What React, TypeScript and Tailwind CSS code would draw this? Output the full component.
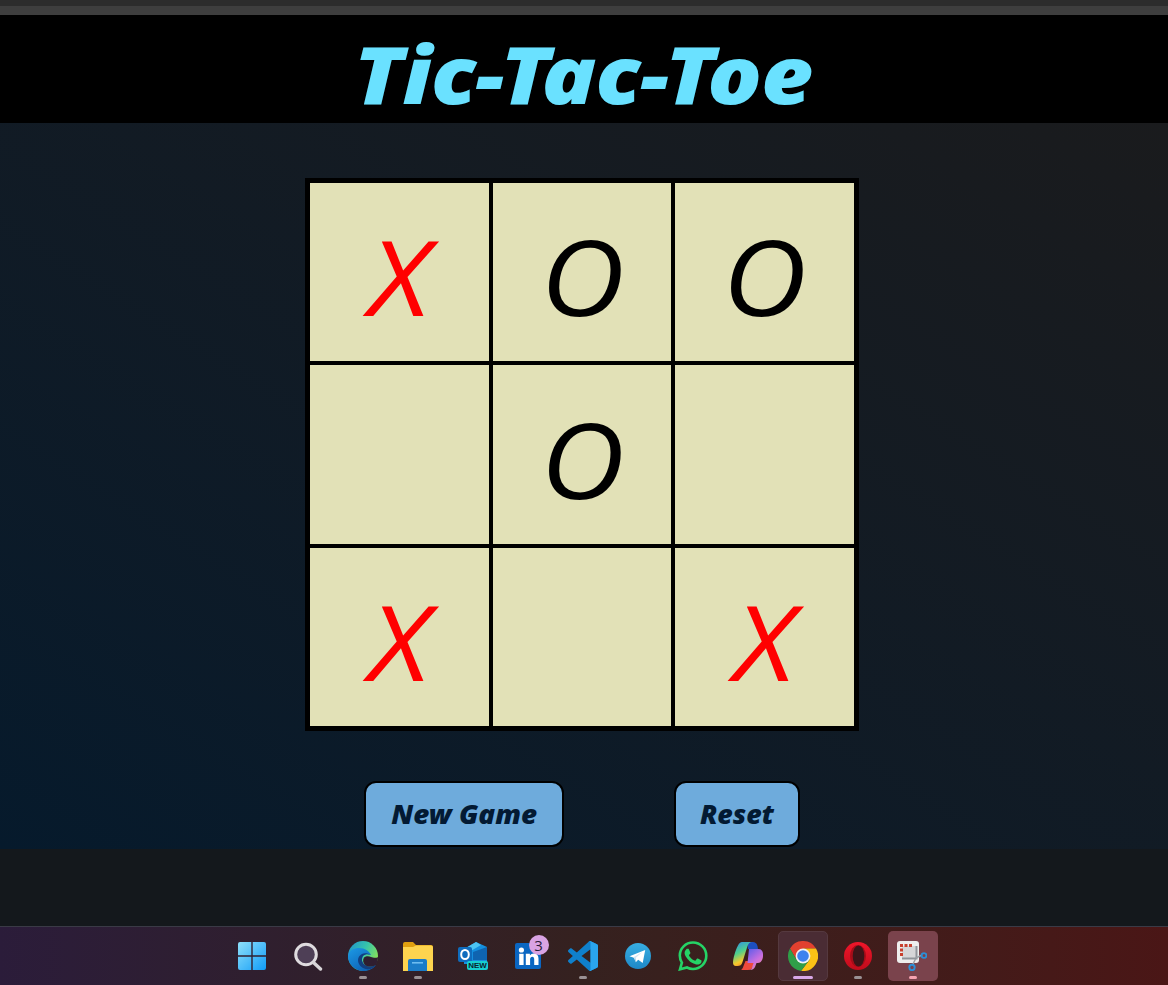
import React from 'react';

const board = ['X', 'O', 'O', '', 'O', '', 'X', '', 'X'];

const Dot = ({ color = 'bg-[#9a9194]', wide = false }: { color?: string; wide?: boolean }) => (
  <div className={`absolute bottom-[2px] left-1/2 -translate-x-1/2 h-[3px] rounded-full ${wide ? 'w-[20px]' : 'w-[8px]'} ${color}`} />
);

const WindowsIcon = () => (
  <svg width="30" height="30" viewBox="0 0 30 30" className="ml-[-3px]">
    <defs>
      <linearGradient id="win" x1="0" y1="0" x2="1" y2="1">
        <stop offset="0" stopColor="#8fe0fa" />
        <stop offset="1" stopColor="#109cf8" />
      </linearGradient>
    </defs>
    <path fill="url(#win)" d="M1 3a2 2 0 0 1 2-2h11.300v13.300H1zM15.700 1H27a2 2 0 0 1 2 2v11.300H15.700zM1 15.700h13.300V29H3a2 2 0 0 1-2-2zM15.700 15.700H29V27a2 2 0 0 1-2 2H15.700z" />
  </svg>
);

const SearchIcon = () => (
  <svg width="30" height="30" viewBox="0 0 30 30" fill="none">
    <circle cx="13" cy="13.500" r="10.300" fill="#4e3f56" stroke="#dfdcdf" strokeWidth="3" />
    <path d="M21 22l6.500 6" stroke="#d8d5d8" strokeWidth="3.400" strokeLinecap="round" />
  </svg>
);

const EdgeIcon = () => (
  <svg width="30" height="30" viewBox="0 0 30 30">
    <defs>
      <linearGradient id="edgeA" x1="0" y1="0" x2="1" y2="0.5">
        <stop offset="0" stopColor="#1f8fd0" />
        <stop offset="0.55" stopColor="#35c4ac" />
        <stop offset="1" stopColor="#86e25a" />
      </linearGradient>
      <linearGradient id="edgeB" x1="0" y1="0" x2="0.8" y2="1">
        <stop offset="0" stopColor="#1c9ae6" />
        <stop offset="1" stopColor="#0c5cb0" />
      </linearGradient>
    </defs>
    <circle cx="15" cy="15" r="15" fill="url(#edgeA)" />
    <path fill="url(#edgeB)" d="M0 15C1 9 6 7 11 7c6 0 10 3 12 7-3-1-6-1-8 1-2 3-1 7 2 9 3 2 7 2 11 0-3 4-8 6-13 6C7 30 0 23 0 15z" />
    <path fill="#123f80" d="M14 13c2-1 6-1 9 1-3-1-6-1-8 1-2 3-1 7 2 9 3 2 7 2 11 0-2 3-6 5-10 4-5-1-8-5-8-9 0-3 2-5 4-6z" />
    <path fill="#2f1e30" d="M16 16.500c2-1.500 5-1.500 7-.5 2 1 7 1 7 0 0 3-1 6-2 8-4 2-8 2-11 0-2-2-2.500-5-1-7.500z" />
  </svg>
);

const FolderIcon = () => (
  <svg width="30" height="29" viewBox="0 0 30 29">
    <path fill="#e0a010" d="M0 2a2 2 0 0 1 2-2h8l3 3h15a2 2 0 0 1 2 2v5H0z" />
    <path fill="#fdd44f" d="M0 5h10l3-1.500h15a2 2 0 0 1 2 2V29H0z" />
    <path fill="#1a7cc8" d="M5 19a2 2 0 0 1 2-2h15a2 2 0 0 1 2 2v10H5z" />
    <rect x="9" y="20" width="11" height="1.600" fill="#6cbcf0" />
  </svg>
);

const OutlookIcon = () => (
  <div className="relative w-[30px] h-[28px]">
    <svg width="30" height="28" viewBox="0 0 30 28" className="absolute inset-0">
      <path fill="#1490df" d="M6 7L18 0l11 5v17H6z" />
      <path fill="#0f64b0" d="M15 10l14-5v13H15z" />
      <path fill="#4cc4f2" d="M6 7L18 0l5 3-12 7z" />
      <rect x="0" y="5" width="14" height="15" rx="2" fill="#0f6cbd" />
      <ellipse cx="7" cy="12.500" rx="3.800" ry="4.600" fill="none" stroke="#fff" strokeWidth="2" />
    </svg>
    <span className="absolute right-0 bottom-0 w-[21px] h-[9px] rounded-[2px] bg-[#16cfd0] text-[#0a2430] text-[8px] font-bold leading-[9px] text-center">NEW</span>
  </div>
);

const LinkedInIcon = () => (
  <svg width="26" height="26" viewBox="0 0 26 26">
    <rect width="26" height="26" rx="2" fill="#0a66c2" />
    <circle cx="6.400" cy="7" r="2.600" fill="#fff" />
    <rect x="4.200" y="10.800" width="4.400" height="11.200" fill="#fff" />
    <path fill="#fff" d="M10.800 10.800h4.100v1.700c.8-1.300 2.200-2.100 3.900-2.100 3.300 0 4.700 2 4.700 5.300V22h-4.300v-5.700c0-1.600-.6-2.500-1.900-2.500s-2.200.9-2.200 2.600V22h-4.300z" />
  </svg>
);

const VsCodeIcon = () => (
  <svg width="30" height="30" viewBox="0 0 100 100">
    <path fill="#0f80cc" fillRule="evenodd" d="M70.900 99.300c1.600.6 3.400.6 5-.2l20.600-9.900c2.100-1 3.500-3.200 3.500-5.600V16.400c0-2.400-1.400-4.600-3.500-5.600L75.900.9c-2.100-1-4.600-.8-6.400.5-.3.2-.5.400-.7.700L29.400 38 12.200 25c-1.600-1.200-3.800-1.100-5.300.2l-5.500 5c-1.800 1.700-1.800 4.500 0 6.200L16.200 50 1.400 63.600c-1.800 1.600-1.800 4.500 0 6.100l5.500 5c1.500 1.400 3.700 1.500 5.300.3L29.400 62l39.400 35.900c.6.600 1.300 1.100 2.100 1.400zM75 27.300L45.100 50 75 72.700z" />
    <path fill="#2aa5ee" d="M75.900.9l20.600 9.900c2.100 1 3.500 3.200 3.500 5.600v67.200c0 2.400-1.400 4.600-3.500 5.600l-20.600 9.900c-2.400 1.200-5.300.7-7.100-1.200 2.300 2.300 6.200.7 6.200-2.600V4.700c0-3.300-3.900-4.900-6.200-2.600C70.600.2 73.500-.3 75.900.9z" />
  </svg>
);

const TelegramIcon = () => (
  <svg width="26" height="26" viewBox="0 0 26 26">
    <defs>
      <linearGradient id="tg" x1="0" y1="0" x2="0" y2="1">
        <stop offset="0" stopColor="#37aee2" />
        <stop offset="1" stopColor="#1e88c7" />
      </linearGradient>
    </defs>
    <circle cx="13" cy="13" r="13" fill="url(#tg)" />
    <path fill="#fff" d="M4.500 13.200L20.200 7 17.700 20l-4.500-3.200-2.400 2.400-.5-4z" />
    <path fill="#d4e6f2" d="M10.300 15.200l7-6.200-8.800 5.300 2.300 4.900z" />
  </svg>
);

const WhatsAppIcon = () => (
  <svg width="30" height="30" viewBox="0 0 30 30" fill="none">
    <path d="M15 1.500C7.600 1.500 1.800 7.300 1.800 14.600c0 2.600.8 5 2.100 7L2 28.300l7-1.800c1.800 1 3.900 1.500 6 1.500 7.400 0 13.300-5.900 13.300-13.200S22.400 1.500 15 1.500z" stroke="#25d366" strokeWidth="2.600" />
    <path fill="#25d366" d="M11 8.500c-.3-.7-.6-.7-.9-.7h-.8c-.3 0-.8.100-1.200.6-.4.500-1.500 1.500-1.500 3.500s1.500 4 1.700 4.300c.2.300 2.900 4.600 7.200 6.300 3.500 1.400 4.200 1.100 5 1 .8-.1 2.500-1 2.800-2 .3-1 .3-1.800.2-2-.1-.2-.4-.3-.8-.5l-2.800-1.400c-.4-.2-.7-.3-1 .2l-1.300 1.700c-.3.300-.5.300-.9.100-.4-.2-1.800-.7-3.400-2.100-1.200-1.100-2.100-2.500-2.300-2.900-.2-.4 0-.7.200-.9l.7-.8c.2-.2.300-.4.400-.7.100-.2.100-.5 0-.7z" />
  </svg>
);

const CopilotIcon = () => (
  <svg width="30" height="28" viewBox="0 0 30 28">
    <defs>
      <linearGradient id="copA" x1="0.1" y1="0" x2="0.5" y2="1">
        <stop offset="0" stopColor="#2f8fe8" />
        <stop offset="0.45" stopColor="#4fd08c" />
        <stop offset="0.8" stopColor="#f7c92c" />
        <stop offset="1" stopColor="#f08a2c" />
      </linearGradient>
      <linearGradient id="copB" x1="0.2" y1="0" x2="0.8" y2="1">
        <stop offset="0" stopColor="#6a5fe8" />
        <stop offset="0.55" stopColor="#c96fe0" />
        <stop offset="1" stopColor="#f08aa0" />
      </linearGradient>
    </defs>
    <path fill="#1d4fc0" d="M14 0h6c2 0 3.500 1 4.500 4l.5 3h-10z" />
    <path fill="#ef4a3c" d="M8 28h7c3 0 4.500-2 5.500-5l1-4h-9l-2 5c-.6 2-1.500 3.500-2.500 4z" />
    <path fill="url(#copB)" d="M16 7h9.500c2.800 0 4.500 2 4.500 5v2c0 3.500-2 7-5 7h-1.500l-1.500 4c-1 2-2.500 3-5 3h-1c2 0 3-1.500 3.500-4l1-3h-6z" />
    <path fill="url(#copA)" d="M9 0h10c-2 0-3.500 1.500-4.500 4l-5 16c-.8 3-2.500 4-5 4H2.800C1 24 0 22.500 0 20.500c0-2 .5-5 1.500-8C2.500 9 3.500 6 5 3.500 6 1.500 7.500 0 9 0z" />
  </svg>
);

const ChromeIcon = () => (
  <svg width="30" height="30" viewBox="0 0 30 30">
    <path fill="#e2412f" d="M2 7.500A15 15 0 0 1 28 7.500H15L8.500 18.750z" />
    <path fill="#fbc116" d="M28 7.500A15 15 0 0 1 13 29.900L21.500 18.750 15 7.500z" />
    <path fill="#2f9e48" d="M13 29.900A15 15 0 0 1 2 7.500L8.500 18.750h13z" />
    <circle cx="15" cy="15" r="7.400" fill="#f1f3f4" />
    <circle cx="15" cy="15" r="5.800" fill="#3d82ef" />
  </svg>
);

const OperaIcon = () => (
  <svg width="28" height="28" viewBox="0 0 28 28">
    <defs>
      <linearGradient id="op" x1="0" y1="0" x2="0" y2="1">
        <stop offset="0" stopColor="#f0162a" />
        <stop offset="1" stopColor="#c00c1c" />
      </linearGradient>
    </defs>
    <circle cx="14" cy="14" r="14" fill="url(#op)" />
    <ellipse cx="14" cy="14" rx="8" ry="11" fill="#a60c18" />
    <ellipse cx="14.500" cy="14" rx="5.800" ry="10.500" fill="#3c1519" />
  </svg>
);

const SnipIcon = () => (
  <svg width="30" height="30" viewBox="0 0 30 30" fill="none" className="ml-[-2px] mt-[-1px]">
    <rect x="0" y="0" width="22" height="22" rx="3" fill="#eeeeee" />
    <rect x="5" y="5" width="14" height="12" fill="#d6d6d8" />
    <path fill="#c8402e" d="M3 3h3v3H3zM7.500 3h3v3h-3zM12 3h3v3h-3zM3 7.500h3v3H3zM3 12h3v3H3z" />
    <path d="M5 17.500h14.500V5" stroke="#8f9499" strokeWidth="2" />
    <path d="M19 17l6-3M18.500 18l-3 6" stroke="#9aa0a6" strokeWidth="1.500" />
    <circle cx="15" cy="26.500" r="2.700" stroke="#2a90d8" strokeWidth="1.900" />
    <circle cx="27" cy="14.500" r="2.400" stroke="#2a90d8" strokeWidth="1.800" />
  </svg>
);

const slot = 'relative w-[55px] h-[50px] flex items-center justify-center';

export default function App() {
  return (
    <div className="h-[985px] w-[1168px] overflow-hidden flex flex-col font-['Liberation_Sans',sans-serif] bg-[#14181c]">
      <div className="h-[6px] bg-[#2c2c2c]" />
      <div className="h-[9px] bg-[#3e3e3e]" />

      <header className="h-[108px] bg-black flex items-center justify-center pt-[8px] pr-[2px]">
        <h1 className="font-['Noto_Sans',sans-serif] font-black italic text-[#6ae1ff] text-[80px] leading-none tracking-[-1px] scale-x-[1.13]">
          Tic-Tac-Toe
        </h1>
      </header>

      <main className="h-[726px] flex flex-col items-center pt-[55px] bg-gradient-to-tr from-[#061a2c] to-[#1a1b1d]">
        <div className="bg-black p-[5px] grid grid-cols-[179px_178px_179px] grid-rows-[178px_179px_178px] gap-[4px] ml-[-4px]">
          {board.map((mark, i) => (
            <div
              key={i}
              className={`bg-[#e2e1b7] flex items-center justify-center font-['Open_Sans',sans-serif] font-medium italic text-[104px] leading-none pt-[8px] ${mark === 'X' ? 'text-[#ff0000]' : 'text-black'}`}
            >
              <span className="scale-x-[1.12]">{mark}</span>
            </div>
          ))}
        </div>
        <div className="mt-[50px] flex gap-[110px] ml-[-4px]">
          <button className="w-[200px] h-[66px] pt-[1px] rounded-[12px] border-2 border-black bg-[#6eabdc] text-[#031a33] font-['Noto_Sans',sans-serif] font-black italic text-[26px]">
            <span className="inline-block scale-x-[1.07]">New Game</span>
          </button>
          <button className="w-[126px] h-[66px] pt-[1px] rounded-[12px] border-2 border-black bg-[#6eabdc] text-[#031a33] font-['Noto_Sans',sans-serif] font-black italic text-[26px]">
            <span className="inline-block scale-x-[1.03]">Reset</span>
          </button>
        </div>
      </main>

      <div className="h-[77px] bg-[#14181c]" />

      <footer className="h-[59px] border-t border-[#3a3a46] bg-gradient-to-r from-[#2b1c3a] via-[#35211f] to-[#4a1616] flex items-center justify-center pr-[2px]">
        <div className="flex items-center">
          <div className={slot}><WindowsIcon /></div>
          <div className={slot}><SearchIcon /></div>
          <div className={slot}><EdgeIcon /><Dot /></div>
          <div className={slot}><FolderIcon /><Dot /></div>
          <div className={slot}><OutlookIcon /></div>
          <div className={slot}>
            <LinkedInIcon />
            <span className="absolute top-[4px] right-[7px] w-[20px] h-[20px] rounded-full bg-[#d9a3e3] text-[#2b1c3a] font-['Open_Sans',sans-serif] text-[15px] leading-[20px] text-center">3</span>
          </div>
          <div className={slot}><VsCodeIcon /><Dot /></div>
          <div className={slot}><TelegramIcon /></div>
          <div className={slot}><WhatsAppIcon /></div>
          <div className={slot}><CopilotIcon /></div>
          <div className={slot}>
            <div className="absolute inset-y-0 left-[2.500px] w-[50px] rounded-[5px] bg-[#4a2c34] border border-[#55393f]" />
            <div className="relative flex"><ChromeIcon /></div>
            <Dot color="bg-[#d8a8e8]" wide />
          </div>
          <div className={slot}><OperaIcon /><Dot /></div>
          <div className={slot}>
            <div className="absolute inset-y-0 left-[2.500px] w-[50px] rounded-[5px] bg-[#7a434c]" />
            <div className="relative flex"><SnipIcon /></div>
            <Dot color="bg-[#f5a3b0]" />
          </div>
        </div>
      </footer>
    </div>
  );
}
